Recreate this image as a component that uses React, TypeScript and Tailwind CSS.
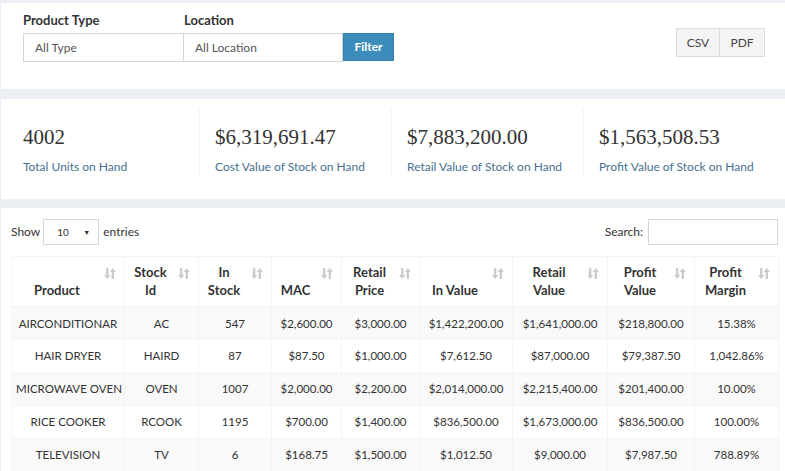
import React from 'react';

const sans = { fontFamily: 'Lato, "Liberation Sans", sans-serif' };
const serif = { fontFamily: '"Liberation Serif", "DejaVu Serif", serif' };

const stats = [
  { value: '4002', label: 'Total Units on Hand' },
  { value: '$6,319,691.47', label: 'Cost Value of Stock on Hand' },
  { value: '$7,883,200.00', label: 'Retail Value of Stock on Hand' },
  { value: '$1,563,508.53', label: 'Profit Value of Stock on Hand' },
];

const columns = [
  { lines: ['Product'], w: 'w-[113px]' },
  { lines: ['Stock', 'Id'], w: 'w-[74px]' },
  { lines: ['In', 'Stock'], w: 'w-[73px]' },
  { lines: ['MAC'], w: 'w-[70px]' },
  { lines: ['Retail', 'Price'], w: 'w-[78px]' },
  { lines: ['In Value'], w: 'w-[93px]' },
  { lines: ['Retail', 'Value'], w: 'w-[95px]' },
  { lines: ['Profit', 'Value'], w: 'w-[87px]' },
  { lines: ['Profit', 'Margin'], w: 'w-[84px]' },
];

const rows = [
  ['AIRCONDITIONAR', 'AC', '547', '$2,600.00', '$3,000.00', '$1,422,200.00', '$1,641,000.00', '$218,800.00', '15.38%'],
  ['HAIR DRYER', 'HAIRD', '87', '$87.50', '$1,000.00', '$7,612.50', '$87,000.00', '$79,387.50', '1,042.86%'],
  ['MICROWAVE OVEN', 'OVEN', '1007', '$2,000.00', '$2,200.00', '$2,014,000.00', '$2,215,400.00', '$201,400.00', '10.00%'],
  ['RICE COOKER', 'RCOOK', '1195', '$700.00', '$1,400.00', '$836,500.00', '$1,673,000.00', '$836,500.00', '100.00%'],
  ['TELEVISION', 'TV', '6', '$168.75', '$1,500.00', '$1,012.50', '$9,000.00', '$7,987.50', '788.89%'],
];

function SortIcon() {
  return (
    <svg width="12" height="13" viewBox="0 0 12 13" className="absolute right-[8px] top-[10px]" fill="#cccccc">
      <rect x="2" y="1" width="2.4" height="8" />
      <polygon points="0,8 6.4,8 3.2,12" />
      <rect x="7.6" y="4" width="2.4" height="8" />
      <polygon points="5.6,5 12,5 8.8,1" />
    </svg>
  );
}

export default function App() {
  return (
    <div className="min-h-screen bg-[#ecf0f5] pt-[3px] text-[#333]" style={sans}>
      {/* filter panel */}
      <div className="ml-[1px] h-[86px] bg-white flex items-start justify-between pl-[22px] pr-[20px] pt-[10px]">
        <div className="flex">
          <div className="flex flex-col">
            <label className="text-[13px] font-bold leading-[14px] h-[20px]">Product Type</label>
            <div className="w-[161px] h-[29px] border border-[#d2d6de] flex items-center pl-[11px] text-[12px] text-[#555]">All Type</div>
          </div>
          <div className="flex flex-col">
            <label className="text-[13px] font-bold leading-[14px] h-[20px]">Location</label>
            <div className="w-[159px] h-[29px] border border-l-0 border-[#d2d6de] flex items-center pl-[11px] text-[12px] text-[#555]">All Location</div>
          </div>
          <div className="flex flex-col">
            <div className="h-[20px]" />
            <button className="w-[51px] h-[28px] bg-[#3c8dbc] border border-[#367fa9] text-white text-[12px] font-bold">Filter</button>
          </div>
        </div>
        <div className="flex mt-[15px]">
          <button className="w-[44px] h-[29px] bg-[#f4f4f4] border border-[#ddd] text-[12px] text-[#444]">CSV</button>
          <button className="w-[45px] h-[29px] bg-[#f4f4f4] border border-l-0 border-[#ddd] text-[12px] text-[#444]">PDF</button>
        </div>
      </div>

      {/* summary panel */}
      <div className="ml-[1px] mt-[10px] h-[100px] bg-white flex px-[7px] pt-[9px]">
        {stats.map((s, i) => (
          <div
            key={s.label}
            className={`w-[192px] h-[67px] pl-[15px] pt-[17px] ${i < 3 ? 'border-r border-[#f4f4f4]' : ''}`}
          >
            <div className="text-[21px] leading-[25px]" style={serif}>{s.value}</div>
            <div className="text-[12px] leading-[16px] mt-[9px] text-[#48708f]">{s.label}</div>
          </div>
        ))}
      </div>

      {/* table panel */}
      <div className="ml-[1px] mt-[9px] bg-white pl-[10px] pr-[7px] pt-[11px]">
        <div className="flex items-center justify-between h-[26px] text-[12px]">
          <div className="flex items-center">
            <span className="mr-[3px]">Show</span>
            <div className="w-[56px] h-[26px] border border-[#d2d6de] flex items-center justify-between pl-[13px] pr-[8px] text-[10px]">
              <span>10</span>
              <span className="text-[7px]">▼</span>
            </div>
            <span className="ml-[4px]">entries</span>
          </div>
          <div className="flex items-center">
            <span className="mr-[5px]">Search:</span>
            <div className="w-[130px] h-[26px] border border-[#d2d6de]" />
          </div>
        </div>

        <table className="mt-[11px] table-fixed border-collapse w-[767px]">
          <thead>
            <tr>
              {columns.map((c) => (
                <th
                  key={c.lines.join(' ')}
                  className={`${c.w} relative h-[50px] align-bottom border border-[#f4f4f4] border-b-2 pl-[8px] pr-[30px] pb-[7px] text-center text-[13px] font-bold leading-[18px]`}
                >
                  {c.lines.map((l) => (
                    <div key={l}>{l}</div>
                  ))}
                  <SortIcon />
                </th>
              ))}
            </tr>
          </thead>
          <tbody>
            {rows.map((r, i) => (
              <tr key={r[0]} className={i % 2 === 0 ? 'bg-[#f9f9f9]' : 'bg-white'}>
                {r.map((v, j) => (
                  <td key={j} className="h-[33px] border border-[#f4f4f4] px-[4px] text-center text-[11.5px] whitespace-nowrap">
                    {v}
                  </td>
                ))}
              </tr>
            ))}
          </tbody>
        </table>
      </div>
    </div>
  );
}
